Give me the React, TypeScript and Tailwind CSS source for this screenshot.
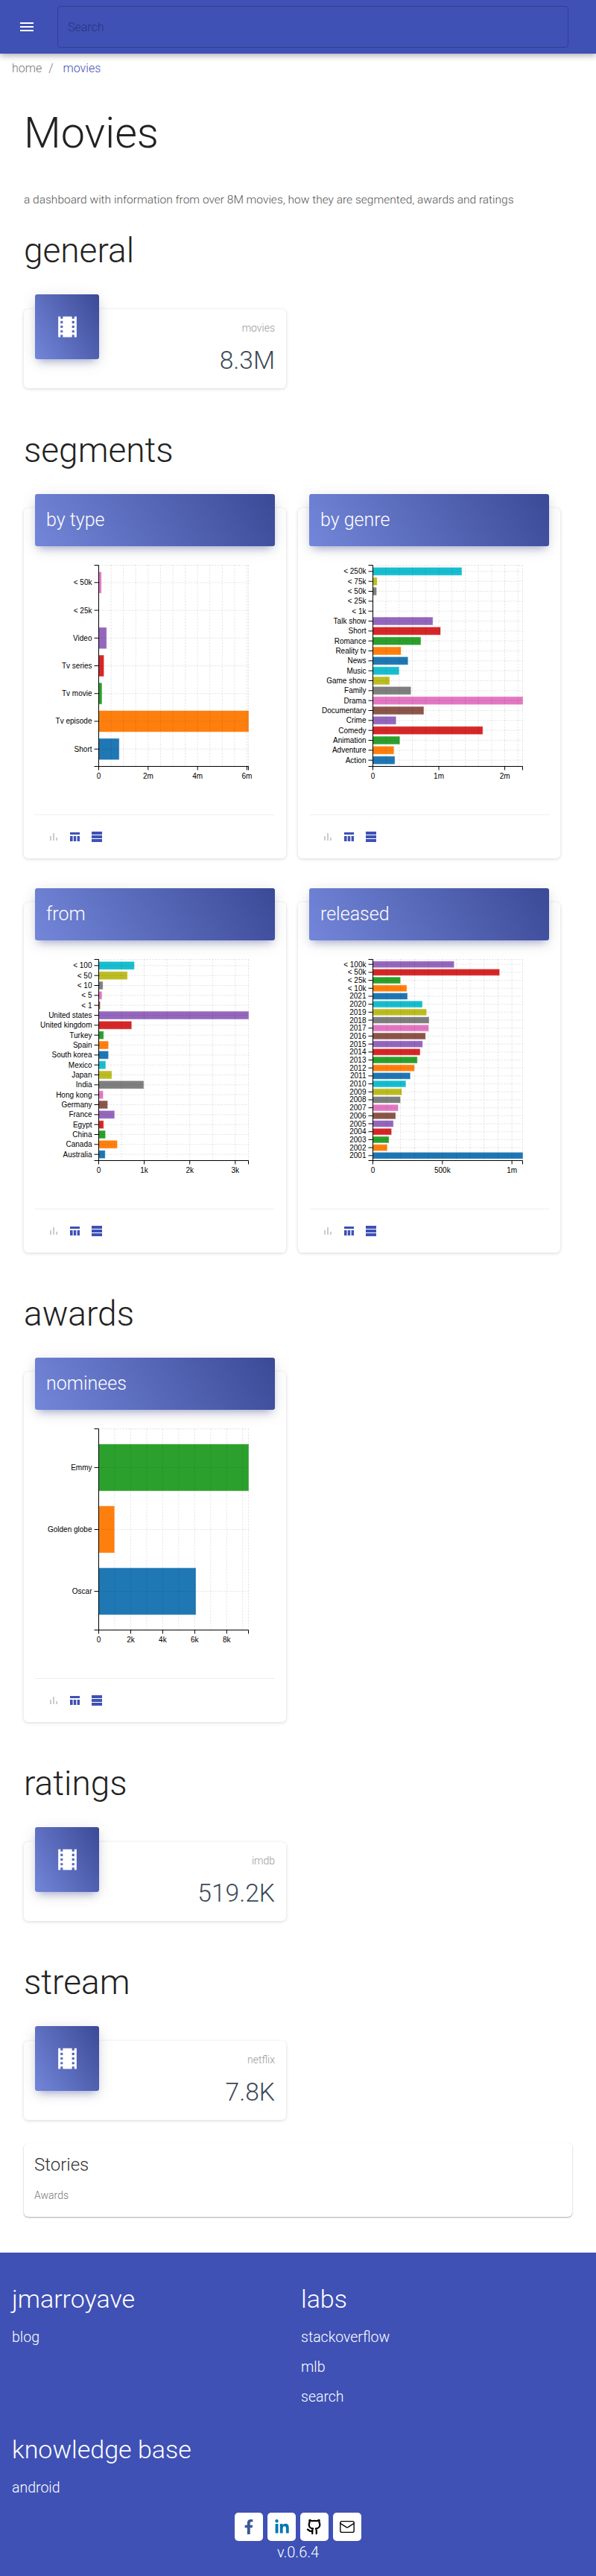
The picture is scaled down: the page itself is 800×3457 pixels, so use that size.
import React from 'react';
import { FaFacebookF, FaLinkedinIn } from 'react-icons/fa';
import { Github, Mail } from 'lucide-react';

const COLORS = ['#1f77b4', '#ff7f0e', '#2ca02c', '#d62728', '#9467bd', '#8c564b', '#e377c2', '#7f7f7f', '#bcbd22', '#17becf'];

type Row = [string, number];

interface ChartProps {
  title: string;
  rows: Row[]; // bottom to top
  max: number;
  minor: number;
  ticks: [number, string][];
}

const X0 = 85.5;
const TOP = 10.5;
const BOTTOM = 280.5;
const CHART_W = 201;

const BarChart: React.FC<ChartProps> = ({ rows, max, minor, ticks }) => {
  const scale = CHART_W / max;
  const step = 270 / (rows.length + 0.25);
  const barH = step * 0.75;
  const center = (i: number) => BOTTOM - step * 0.25 - barH / 2 - i * step;
  const grid: number[] = [];
  for (let v = minor; v < max; v += minor) grid.push(X0 + v * scale);
  grid.push(X0 + CHART_W);

  return (
    <svg width="322" height="300" className="block">
      {rows.map(([label, value], i) => (
        <rect
          key={label}
          x={X0}
          y={center(i) - barH / 2}
          width={value * scale}
          height={barH}
          fill={COLORS[i % 10]}
          stroke={COLORS[i % 10]}
          strokeOpacity="0.45"
        />
      ))}
      <g stroke="#000" strokeOpacity="0.12" strokeDasharray="2 2">
        {grid.map((x) => (
          <line key={x} x1={x} x2={x} y1={TOP} y2={BOTTOM} />
        ))}
        {rows.map(([label], i) => (
          <line key={label} x1={X0} x2={X0 + CHART_W} y1={center(i)} y2={center(i)} />
        ))}
        <line x1={X0} x2={X0 + CHART_W} y1={TOP} y2={TOP} />
      </g>
      <g stroke="#000" fill="none">
        <path d={`M${X0 - 6} ${TOP}H${X0}V${BOTTOM}`} />
        <path d={`M${X0 - 6} ${BOTTOM}H${X0 + CHART_W}v5`} />
        {rows.map(([label], i) => (
          <line key={label} x1={X0 - 6} x2={X0} y1={center(i)} y2={center(i)} />
        ))}
        <line x1={X0} x2={X0} y1={BOTTOM} y2={BOTTOM + 5} />
        {ticks.map(([v, label]) => (
          <line key={label} x1={X0 + v * scale} x2={X0 + v * scale} y1={BOTTOM} y2={BOTTOM + 5} />
        ))}
      </g>
      <g fontFamily="'Liberation Sans', sans-serif" fontSize="10" fill="#000">
        {rows.map(([label], i) => (
          <text key={label} x={X0 - 9} y={center(i) + 3.5} textAnchor="end">
            {label}
          </text>
        ))}
        <text x={X0} y={BOTTOM + 16} textAnchor="middle">0</text>
        {ticks.map(([v, label]) => (
          <text key={label} x={X0 + v * scale} y={BOTTOM + 16} textAnchor="middle">
            {label}
          </text>
        ))}
      </g>
    </svg>
  );
};

const ChartCard: React.FC<ChartProps> = (props) => (
  <div className="mt-[19px] w-[352px] h-[470px] bg-white rounded-md shadow-[0_1px_4px_rgba(0,0,0,0.16)] px-[15px] flex flex-col">
    <div className="-mt-[19px] h-[70px] shrink-0 flex items-center px-[15px] rounded-[3px] text-white text-[25px] font-light bg-[linear-gradient(60deg,#7386d9,#3b4a97)] shadow-[0_4px_20px_rgba(0,0,0,0.12),0_7px_10px_-5px_rgba(63,81,181,0.4)]">
      {props.title}
    </div>
    <div className="mt-[15px]">
      <BarChart {...props} />
    </div>
    <div className="mt-[45px] border-t border-[#eeeeee] pt-[22px] pl-[18px] flex gap-[15px]">
      <svg width="14" height="14" viewBox="0 0 14 14" fill="#cccccc">
        <rect x="2" y="6" width="2" height="6" />
        <rect x="6" y="2" width="2" height="10" />
        <rect x="10" y="8" width="2" height="4" />
      </svg>
      <svg width="14" height="14" viewBox="0 0 14 14" fill="#3f51b5">
        <rect x="0" y="1" width="13" height="3" />
        <rect x="0" y="6" width="3.6" height="7" />
        <rect x="4.8" y="6" width="3.4" height="7" />
        <rect x="9.6" y="6" width="3.4" height="7" />
      </svg>
      <svg width="14" height="14" viewBox="0 0 14 14" fill="#3f51b5">
        <rect x="0" y="0" width="14" height="4" />
        <rect x="0" y="5" width="14" height="4" />
        <rect x="0" y="10" width="14" height="4" />
      </svg>
    </div>
  </div>
);

const StatCard: React.FC<{ label: string; value: string }> = ({ label, value }) => (
  <div className="mt-5 w-[352px] h-[106px] bg-white rounded-md shadow-[0_1px_4px_rgba(0,0,0,0.16)] px-[15px] flex justify-between">
    <div className="-mt-5 w-[86px] h-[87px] rounded-[3px] flex items-center justify-center bg-[linear-gradient(60deg,#7386d9,#3b4a97)] shadow-[0_4px_20px_rgba(0,0,0,0.12),0_7px_10px_-5px_rgba(63,81,181,0.4)]">
      <svg width="37" height="37" viewBox="0 0 24 24" fill="#ffffff">
        <path d="M18 3v2h-2V3H8v2H6V3H4v18h2v-2h2v2h8v-2h2v2h2V3h-2zM8 17H6v-2h2v2zm0-4H6v-2h2v2zm0-4H6V7h2v2zm10 8h-2v-2h2v2zm0-4h-2v-2h2v2zm0-4h-2V7h2v2z" />
      </svg>
    </div>
    <div className="text-right pt-[14px]">
      <div className="text-sm leading-[22px] font-light text-[#999999]">{label}</div>
      <div className="mt-[11px] text-[33.6px] leading-[43px] font-light text-[#3c4858]">{value}</div>
    </div>
  </div>
);

const Heading: React.FC<{ children: React.ReactNode }> = ({ children }) => (
  <h2 className="text-[46px] leading-[48px] font-light text-[#222222] mb-[35px]">{children}</h2>
);

const byType: ChartProps = {
  title: 'by type',
  max: 6.06,
  minor: 0.5,
  ticks: [[2, '2m'], [4, '4m'], [6, '6m']],
  rows: [['Short', 0.82], ['Tv episode', 6.06], ['Tv movie', 0.12], ['Tv series', 0.2], ['Video', 0.31], ['< 25k', 0], ['< 50k', 0.1]],
};

const byGenre: ChartProps = {
  title: 'by genre',
  max: 2.27,
  minor: 0.2,
  ticks: [[1, '1m'], [2, '2m']],
  rows: [
    ['Action', 0.33], ['Adventure', 0.315], ['Animation', 0.404], ['Comedy', 1.663], ['Crime', 0.348],
    ['Documentary', 0.768], ['Drama', 2.27], ['Family', 0.573], ['Game show', 0.251], ['Music', 0.393],
    ['News', 0.528], ['Reality tv', 0.423], ['Romance', 0.723], ['Short', 1.022], ['Talk show', 0.906],
    ['< 1k', 0], ['< 25k', 0], ['< 50k', 0.052], ['< 75k', 0.06], ['< 250k', 1.345],
  ],
};

const from: ChartProps = {
  title: 'from',
  max: 3.29,
  minor: 0.5,
  ticks: [[1, '1k'], [2, '2k'], [3, '3k']],
  rows: [
    ['Australia', 0.136], ['Canada', 0.402], ['China', 0.141], ['Egypt', 0.103], ['France', 0.342],
    ['Germany', 0.19], ['Hong kong', 0.092], ['India', 0.984], ['Japan', 0.283], ['Mexico', 0.147],
    ['South korea', 0.207], ['Spain', 0.207], ['Turkey', 0.103], ['United kingdom', 0.717], ['United states', 3.29],
    ['< 1', 0.027], ['< 5', 0.065], ['< 10', 0.087], ['< 50', 0.625], ['< 100', 0.777],
  ],
};

const released: ChartProps = {
  title: 'released',
  max: 1077,
  minor: 100,
  ticks: [[500, '500k'], [1000, '1m']],
  rows: [
    ['2001', 1077], ['2002', 101], ['2003', 114], ['2004', 132], ['2005', 146], ['2006', 162], ['2007', 180],
    ['2008', 196], ['2009', 206], ['2010', 235], ['2011', 267], ['2012', 297], ['2013', 318], ['2014', 338],
    ['2015', 356], ['2016', 377], ['2017', 399], ['2018', 402], ['2019', 384], ['2020', 354], ['2021', 247],
    ['< 10k', 242], ['< 25k', 196], ['< 50k', 909], ['< 100k', 582],
  ],
};

const nominees: ChartProps = {
  title: 'nominees',
  max: 9.36,
  minor: 1,
  ticks: [[2, '2k'], [4, '4k'], [6, '6k'], [8, '8k']],
  rows: [['Oscar', 6.06], ['Golden globe', 0.97], ['Emmy', 9.36]],
};

const FooterLinks: React.FC<{ title: string; links: string[] }> = ({ title, links }) => (
  <div>
    <h3 className="text-[34px] leading-[40px] font-light">{title}</h3>
    <ul className="mt-3">
      {links.map((l) => (
        <li key={l} className="text-[19.5px] leading-[40px] font-light">{l}</li>
      ))}
    </ul>
  </div>
);

const socialBtn = 'w-[38px] h-[38px] bg-white rounded-[5px] flex items-center justify-center';

export default function App() {
  return (
    <div className="font-['Roboto',sans-serif] bg-white w-full">
      {/* Navbar */}
      <header className="h-[72px] bg-[#3f51b5] flex items-center pl-6 pr-[37px] shadow-[0_3px_8px_rgba(0,0,0,0.3)] relative">
        <svg width="24" height="24" viewBox="0 0 24 24" fill="#ffffff" className="shrink-0">
          <path d="M3 18h18v-2H3v2zm0-5h18v-2H3v2zm0-5h18V6H3v2z" />
        </svg>
        <input
          placeholder="Search"
          className="ml-[29px] flex-1 h-[56px] rounded border border-[#30408f] bg-transparent px-[13px] text-base font-light placeholder:text-[#26337f] outline-none"
        />
      </header>

      {/* Breadcrumb */}
      <div className="h-10 pl-4 flex items-center text-base font-light text-[#777777]">
        <span>home</span>
        <span className="ml-[9px]">/</span>
        <span className="ml-[13px] text-[#3f51b5]">movies</span>
      </div>

      <main className="px-8">
        <h1 className="mt-[34px] text-[57.5px] leading-[66px] font-light text-[#222222]">Movies</h1>
        <p className="mt-[43px] text-[15.5px] leading-[27px] font-light text-[#555555]">
          a dashboard with information from over 8M movies, how they are segmented, awards and ratings
        </p>

        <section className="mt-[30px] flex flex-col">
          <Heading>general</Heading>
          <StatCard label="movies" value="8.3M" />
        </section>

        <section className="mt-[59px] flex flex-col">
          <Heading>segments</Heading>
          <div className="grid grid-cols-[352px_352px] gap-x-4 gap-y-[40px]">
            <ChartCard {...byType} />
            <ChartCard {...byGenre} />
            <ChartCard {...from} />
            <ChartCard {...released} />
          </div>
        </section>

        <section className="mt-[58px] flex flex-col">
          <Heading>awards</Heading>
          <ChartCard {...nominees} />
        </section>

        <section className="mt-[58px] flex flex-col">
          <Heading>ratings</Heading>
          <StatCard label="imdb" value="519.2K" />
        </section>

        <section className="mt-[58px] flex flex-col">
          <Heading>stream</Heading>
          <StatCard label="netflix" value="7.8K" />
        </section>

        <div className="mt-[31px] h-[99px] rounded-md bg-white px-[14px] pt-[13px] shadow-[0_1px_2px_rgba(0,0,0,0.35)]">
          <div className="text-[24px] leading-[32px] font-light text-[#333333]">Stories</div>
          <div className="mt-[15px] text-sm leading-5 font-light text-[#777777]">Awards</div>
        </div>
      </main>

      {/* Footer */}
      <footer className="mt-[48px] bg-[#3f51b5] text-white pt-[42px] pb-[21px]">
        <div className="pl-4 grid grid-cols-[388px_1fr] gap-y-[30px]">
          <FooterLinks title="jmarroyave" links={['blog']} />
          <FooterLinks title="labs" links={['stackoverflow', 'mlb', 'search']} />
          <FooterLinks title="knowledge base" links={['android']} />
        </div>
        <div className="mt-[13px] flex justify-center gap-[6px]">
          <span className={socialBtn}><FaFacebookF size={20} color="#3b5998" /></span>
          <span className={socialBtn}><FaLinkedinIn size={21} color="#0077b5" /></span>
          <span className={socialBtn}><Github size={22} color="#000000" strokeWidth={2.4} /></span>
          <span className={socialBtn}><Mail size={22} color="#000000" strokeWidth={1.5} /></span>
        </div>
        <div className="mt-[3px] text-center text-xl leading-6 font-light">v.0.6.4</div>
      </footer>
    </div>
  );
}
